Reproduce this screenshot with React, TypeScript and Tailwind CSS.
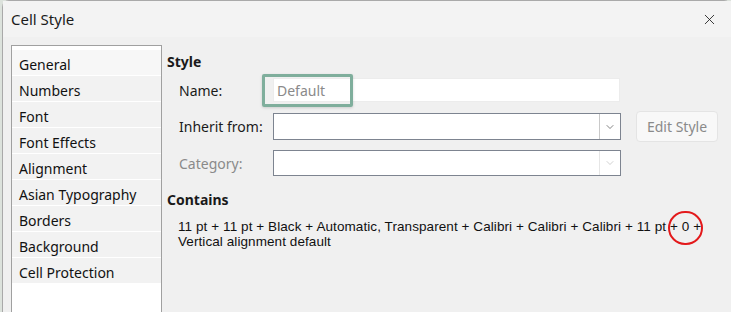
import { ChevronDown, X } from 'lucide-react';

const PAGES = [
  'General',
  'Numbers',
  'Font',
  'Font Effects',
  'Alignment',
  'Asian Typography',
  'Borders',
  'Background',
  'Cell Protection',
];

const FONT = { fontFamily: '"Noto Sans", "Open Sans", sans-serif' };

function Combo({ disabled }: { disabled?: boolean }) {
  return (
    <div className="flex h-full w-[348px] border border-[#7d8490] bg-white">
      <div className="flex-1" />
      <div
        className={`flex w-[21px] items-center justify-center border-l ${
          disabled ? 'border-[#e6e6e6] text-[#b8b8b8]' : 'border-[#c9c9c9] text-[#404040]'
        } bg-white`}
      >
        <ChevronDown size={12} strokeWidth={1.3} />
      </div>
    </div>
  );
}

export default function App() {
  return (
    <div className="relative h-[312px] w-[731px] overflow-hidden bg-[#dce2dc] text-[14px] text-[#1a1a1a]" style={FONT}>
      <div className="ml-[2px] flex h-full flex-col rounded-tl-[7px] rounded-tr-[7px] border-l border-t border-[#a9a9a9] bg-[#f0f0f0]">
        {/* title bar */}
        <div className="flex h-[36px] items-center justify-between bg-[#f3f3f3] pl-[8px] pr-[13px]">
          <span className="text-[15px] text-[#1b1b1b]">Cell Style</span>
          <X size={17} strokeWidth={1.2} className="text-[#1b1b1b]" />
        </div>

        <div className="flex flex-1 pl-[8px] pt-[8px]">
          {/* page list */}
          <div className="h-full w-[151px] border-x border-t border-[#a0a0a0] bg-white pt-[4px]">
            {PAGES.map((p, i) => (
              <div
                key={p}
                className={`mb-[1px] flex h-[25px] items-center pl-[7px] pt-[3px] text-[#111] ${
                  i === 0 ? 'bg-[#f7f7f7]' : 'bg-[#f2f2f2]'
                }`}
              >
                {p}
              </div>
            ))}
          </div>

          {/* right pane */}
          <div className="flex-1 pl-[5px]">
            <div className="pt-[7px] font-bold leading-[20px]">Style</div>

            <div className="mt-[5px] flex h-[25px] items-center pt-[1px]">
              <span className="w-[106px] pl-[12px]">Name:</span>
              <div className="flex h-full w-[347px] items-center border border-[#ececec] bg-white pl-[3px] text-[#8a8a8a]">
                Default
              </div>
            </div>

            <div className="mt-[11px] flex h-[27px] items-center">
              <span className="w-[106px] pl-[12px]">Inherit from:</span>
              <Combo />
              <div className="ml-[15px] flex h-[31px] w-[82px] items-center justify-center rounded-[4px] border border-[#e4e4e4] bg-[#f8f8f8] text-[#8a8a8a]">
                Edit Style
              </div>
            </div>

            <div className="mt-[10px] flex h-[26px] items-center">
              <span className="w-[106px] pl-[12px] pt-[1px] text-[#8a8a8a]">Category:</span>
              <Combo disabled />
            </div>

            <div className="mt-[14px] font-bold leading-[20px]">Contains</div>
            <div className="mt-[9px] pl-[11px] font-['Liberation_Sans',sans-serif] text-[13.5px] tracking-[0.08px] text-[#111]">
              <div className="h-[15px] leading-[15px]">
                11 pt + 11 pt + Black + Automatic, Transparent + Calibri + Calibri + Calibri + 11 pt + 0 +
              </div>
              <div className="h-[15px] leading-[15px]">Vertical alignment default</div>
            </div>
          </div>
        </div>
      </div>

      {/* annotation: focus box around Name field */}
      <div className="absolute left-[262px] top-[74px] h-[33px] w-[91px] rounded-[2px] border-[3px] border-[#7fae9c] shadow-[0_1px_3px_rgba(0,0,0,0.15)]" />
      {/* annotation: red circle */}
      <div className="absolute left-[668px] top-[211px] h-[34px] w-[35px] rounded-full border-[2.5px] border-[#e3191b]" />
    </div>
  );
}
